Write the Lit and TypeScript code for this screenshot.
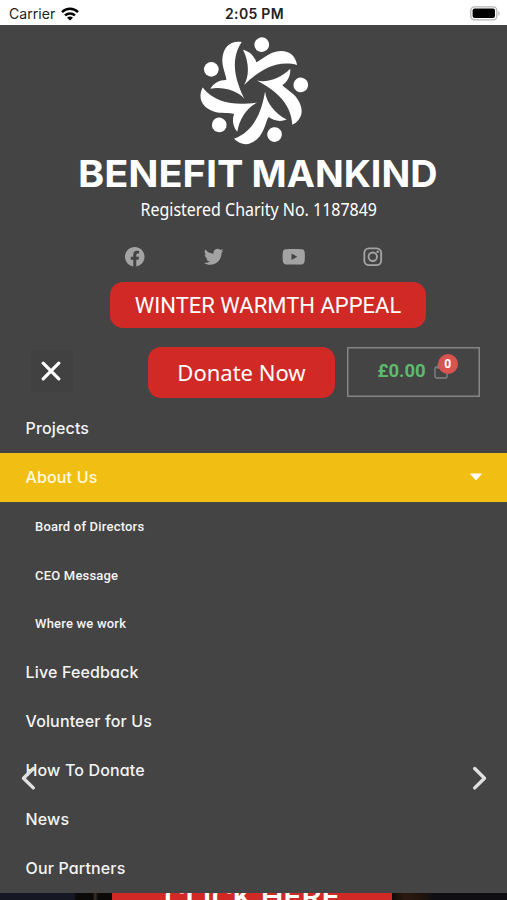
import { LitElement, html, svg, css } from "lit";
import { customElement } from "lit/decorators.js";

const SOCIAL = [
  { name: "facebook", path: svg`<path d="M22 12.06C22 6.5 17.52 2 12 2S2 6.5 2 12.06c0 5.02 3.66 9.18 8.44 9.94v-7.03H7.9v-2.91h2.54V9.85c0-2.52 1.49-3.91 3.78-3.91 1.09 0 2.24.2 2.24.2v2.47H15.2c-1.24 0-1.63.78-1.63 1.57v1.88h2.77l-.44 2.91h-2.33V22C18.34 21.24 22 17.08 22 12.06z"/>` },
  { name: "twitter", path: svg`<path d="M19.94 7.92c.01.18.01.36.01.53C19.95 13.87 15.83 20.1 8.3 20.1c-2.32 0-4.48-.67-6.3-1.84.33.04.65.05.99.05 1.92 0 3.68-.65 5.09-1.75a4.1 4.1 0 0 1-3.83-2.84c.25.04.5.06.77.06.37 0 .74-.05 1.08-.14a4.1 4.1 0 0 1-3.28-4.02v-.05c.54.3 1.17.5 1.84.52A4.1 4.1 0 0 1 3.4 4.62a11.6 11.6 0 0 0 8.44 4.29 4.1 4.1 0 0 1 6.98-3.74 8.1 8.1 0 0 0 2.6-.99 4.1 4.1 0 0 1-1.8 2.26 8.2 8.2 0 0 0 2.36-.64 8.8 8.8 0 0 1-2.04 2.12z"/>` },
  { name: "youtube", path: svg`<path fill-rule="evenodd" d="M22.9 6.4a2.9 2.9 0 0 0-2-2C19.1 4 12 4 12 4s-7.1 0-8.9.4a2.9 2.9 0 0 0-2 2C.6 8.2.6 12 .6 12s0 3.8.5 5.6a2.9 2.9 0 0 0 2 2C4.9 20 12 20 12 20s7.1 0 8.9-.4a2.9 2.9 0 0 0 2-2c.5-1.8.5-5.6.5-5.6s0-3.8-.5-5.6zM9.700 15.400V8.600l5.900 3.400z"/>` },
  { name: "instagram", path: svg`<g fill="none" stroke="currentColor" stroke-width="1.9"><rect x="3.400" y="3.400" width="17.200" height="17.200" rx="4.800"/><circle cx="12" cy="12" r="4.300"/></g><circle cx="17.100" cy="6.900" r="1.300"/>` },
];

const MENU = [
  { label: "Projects", kind: "top" },
  { label: "About Us", kind: "active" },
  { label: "Board of Directors", kind: "sub" },
  { label: "CEO Message", kind: "sub" },
  { label: "Where we work", kind: "sub" },
  { label: "Live Feedback", kind: "top" },
  { label: "Volunteer for Us", kind: "top" },
  { label: "How To Donate", kind: "top" },
  { label: "News", kind: "top" },
  { label: "Our Partners", kind: "top" },
];

@customElement("status-bar")
class StatusBar extends LitElement {
  static styles = css`
    :host { display: grid; grid-template-columns: 1fr auto 1fr; align-items: center; height: 25px; padding: 2px 7px 0 9px; box-sizing: border-box; background: #fff; color: #222; font-family: Inter, sans-serif; }
    .carrier { display: flex; align-items: center; gap: 6px; font-size: 14px; letter-spacing: 0.05px; }
    .time { font-size: 14px; font-weight: 600; letter-spacing: 0.3px; }
    .battery { justify-self: end; }
    svg { display: block; }
  `;
  render() {
    return html`
      <div class="carrier">Carrier
        <svg width="18" height="14" viewBox="0 0 18 14" fill="none" stroke="#000" stroke-width="2.500"><path d="M1 5.200C5.500.700 12.500.700 17 5.200"/><path d="M4 8.400c2.800-2.700 7.200-2.700 10 0"/><path d="M9 13.600 6 10.700c1.700-1.500 4.300-1.500 6 0z" fill="#000" stroke="none"/></svg>
      </div>
      <div class="time">2:05 PM</div>
      <svg class="battery" width="30" height="15" viewBox="0 0 30 15"><rect x=".8" y=".8" width="26" height="13" rx="3.600" fill="#fff" stroke="#b5b5b5" stroke-width="1.300"/><rect x="2.600" y="2.600" width="22.400" height="9.400" rx="2" fill="#000"/><path d="M28.300 5v4.800c1.800-.8 1.800-4 0-4.800z" fill="#b5b5b5"/></svg>
    `;
  }
}

@customElement("brand-logo")
class BrandLogo extends LitElement {
  static styles = css`
    :host { display: block; }
    svg { display: block; }
    .name { font: 700 37.500px Inter, sans-serif; }
    .charity { font: 400 17.500px "Noto Sans", sans-serif; }
  `;
  render() {
    return html`
      <svg width="507" height="200" viewBox="0 25 507 200" fill="#fff">
        <g transform="translate(190 30) scale(.33333)">
          ${[0, 72, 144, 216, 288].map((a) => svg`
            <g transform="rotate(${a} 190.600 185)">
              <circle cx="64" cy="118" r="22"/>
              <path d="M155 36C120 31 99 52 97 88C96 114 109 136 109 150C91 149 71 159 61 176C98 170 140 180 163 206C141 160 116 95 155 36Z"/>
            </g>`)}
        </g>
        <text class="name" x="78" y="186.500" textLength="165.500" lengthAdjust="spacingAndGlyphs">BENEFIT</text>
        <text class="name" x="251.500" y="186.500" textLength="186" lengthAdjust="spacingAndGlyphs">MANKIND</text>
        <text class="charity" x="140.500" y="215.500" textLength="236.500" lengthAdjust="spacingAndGlyphs">Registered Charity No. 1187849</text>
      </svg>
    `;
  }
}

@customElement("app-root")
class AppRoot extends LitElement {
  static styles = css`
    :host { display: block; position: relative; width: 507px; height: 900px; overflow: hidden; background: #444; color: #fff; }
    * { box-sizing: border-box; }
    svg { display: block; }
    .social { display: grid; grid-template-columns: repeat(4, 79.500px); justify-content: center; justify-items: center; align-items: center; height: 57px; padding-top: 6px; color: #a3a3a3; }
    .appeal { display: flex; align-items: center; justify-content: center; width: 316px; height: 46px; margin-left: 110px; border-radius: 13px; background: #d02926; font: 400 22px Roboto, sans-serif; }
    .actions { display: flex; align-items: flex-start; height: 75px; padding: 19px 27px 0 31px; }
    .close { display: grid; place-items: center; width: 42px; height: 42px; margin: 3px 75px 0 0; padding-right: 2px; background: #414141; }
    .donate { display: flex; align-items: center; justify-content: center; width: 187px; height: 51px; margin: -.5px 12px 0 0; padding-bottom: 1px; border-radius: 13px; background: #d02926; font: 400 22px "Noto Sans", sans-serif; }
    .cart { display: flex; align-items: center; width: 133px; height: 50px; padding: 0 0 2px 29.500px; border: 1.500px solid #858585; box-shadow: inset 0 0 0 .5px #858585; color: #5fb96c; font: 700 18.500px Roboto, sans-serif; }
    .bag { position: relative; margin-left: 8px; }
    .count { position: absolute; left: 4px; top: -9px; width: 20px; height: 20px; border-radius: 50%; background: #d9534f; color: #fff; font: 700 12px/20px Roboto, sans-serif; text-align: center; }
    .menu { display: flex; flex-direction: column; padding-top: 1px; }
    .item { display: flex; align-items: center; justify-content: space-between; height: 48.870px; padding: 0 25px 1px 25.500px; color: #f4f4f4; font: 500 16px Inter, sans-serif; letter-spacing: .15px; font-feature-settings: "cv11"; }
    .active { background: #f1bf14; color: #fffbe0; }
    .sub { padding-left: 35px; padding-bottom: 0; font: 500 13px Roboto, sans-serif; letter-spacing: .2px; }
    .hero { display: flex; justify-content: center; height: 20px; background: linear-gradient(90deg, #151722 0 74px, #0c0a09 76px 93px, #3a332d 95px, #0c0a09 98px 390px, #2b1a10 405px, #1a120e 428px, #0f0f13 432px); }
    .cta { width: 280px; height: 20px; margin-right: 3px; overflow: hidden; background: #d02926; font: 500 32px/8px Roboto, sans-serif; text-align: center; }
    .arrow { position: absolute; top: 766px; color: #e0e0e0; }
    .prev { left: 21px; }
    .next { left: 472px; }
  `;
  render() {
    return html`
      <status-bar></status-bar>
      <brand-logo></brand-logo>
      <div class="social">
        ${SOCIAL.map((s) => html`<svg class=${s.name} width="23.500" height="23.500" viewBox="0 0 24 24" fill="currentColor">${s.path}</svg>`)}
      </div>
      <div class="appeal">WINTER WARMTH APPEAL</div>
      <div class="actions">
        <div class="close"><svg width="20" height="20" viewBox="0 0 20 20" stroke="#fff" stroke-width="3.200" stroke-linecap="round"><path d="M2.200 2.200l15.600 15.600M17.800 2.200 2.200 17.800"/></svg></div>
        <div class="donate">Donate Now</div>
        <div class="cart">£0.00
          <div class="bag">
            <svg width="14" height="16" viewBox="0 0 14 16" fill="none" stroke="#818181" stroke-width="1.400"><rect x="1" y="4" width="12" height="11" rx="1.500"/><path d="M4 6V3a3 3 0 0 1 6 0v3"/></svg>
            <span class="count">0</span>
          </div>
        </div>
      </div>
      <div class="menu">
        ${MENU.map((m) => html`<div class="item ${m.kind}">${m.label}${m.kind === "active"
          ? html`<svg width="12" height="8" viewBox="0 0 12 8" fill="#fff"><path d="M1 .5h10q1 .3.400 1L6.700 6.700q-.7.700-1.400 0L.6 1.500Q0 .8 1 .5z"/></svg>` : ""}</div>`)}
      </div>
      <div class="hero"><div class="cta">CLICK HERE</div></div>
      <svg class="arrow prev" width="15" height="25" viewBox="0 0 15 25" fill="none" stroke="currentColor" stroke-width="3.400" stroke-linecap="round" stroke-linejoin="round"><path d="M12.300 2.500 2.500 12.200l9.800 9.700"/></svg>
      <svg class="arrow next" width="15" height="25" viewBox="0 0 15 25" fill="none" stroke="currentColor" stroke-width="3.400" stroke-linecap="round" stroke-linejoin="round"><path d="M2.700 2.500l9.800 9.700-9.800 9.700"/></svg>
    `;
  }
}
